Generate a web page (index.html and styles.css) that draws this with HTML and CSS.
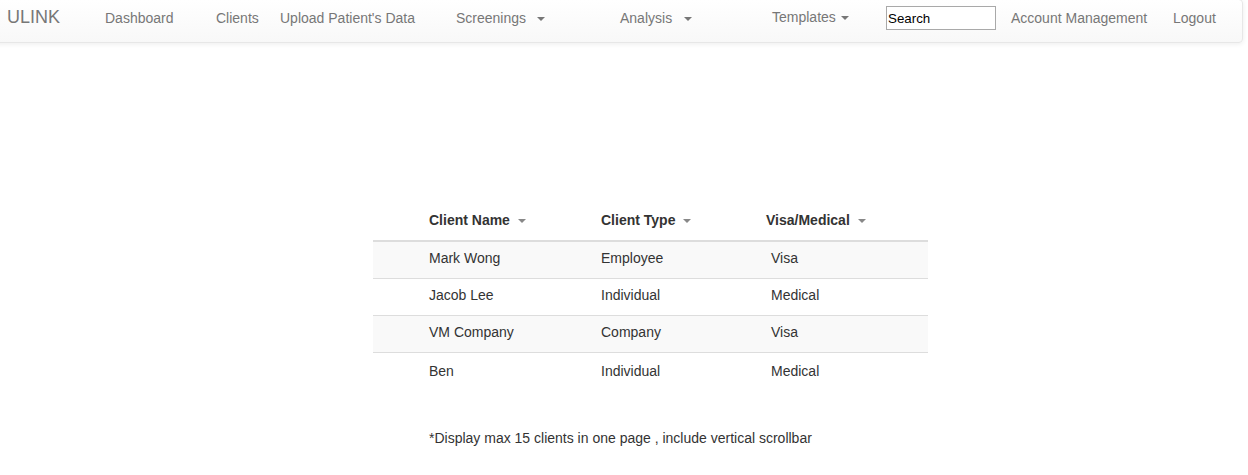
FILE: index.html
```html
<!DOCTYPE html>
<html lang="en">
<head>
<meta charset="utf-8">
<title>ULINK - Clients</title>
<link rel="stylesheet" href="styles.css">
</head>
<body>
<nav class="navbar">
  <a class="brand" href="#">ULINK</a>
  <ul class="nav">
    <li class="item w-dash"><a href="#">Dashboard</a></li>
    <li class="item w-clients"><a href="#">Clients</a></li>
    <li class="item w-upload"><a href="#">Upload Patient's Data</a></li>
    <li class="item w-screen"><a href="#">Screenings<span class="caret caret-wide"></span></a></li>
    <li class="item w-analysis"><a href="#">Analysis<span class="caret caret-wider"></span></a></li>
    <li class="item w-templates up"><a href="#">Templates<span class="caret caret-near"></span></a></li>
    <li class="item w-search"><input class="search" type="text" value="Search"></li>
    <li class="item w-account"><a href="#">Account Management</a></li>
    <li class="item"><a href="#">Logout</a></li>
  </ul>
</nav>

<main class="content">
  <table class="clients">
    <colgroup>
      <col class="c1"><col class="c2"><col class="c3">
    </colgroup>
    <thead>
      <tr>
        <th class="first">Client Name<span class="caret caret-th"></span></th>
        <th>Client Type<span class="caret caret-th"></span></th>
        <th>Visa/Medical<span class="caret caret-th"></span></th>
      </tr>
    </thead>
    <tbody>
      <tr class="odd">
        <td class="first">Mark Wong</td><td>Employee</td><td class="vm">Visa</td>
      </tr>
      <tr>
        <td class="first">Jacob Lee</td><td>Individual</td><td class="vm">Medical</td>
      </tr>
      <tr class="odd">
        <td class="first">VM Company</td><td>Company</td><td class="vm">Visa</td>
      </tr>
      <tr class="last">
        <td class="first">Ben</td><td>Individual</td><td class="vm">Medical</td>
      </tr>
    </tbody>
  </table>
  <p class="note">*Display max 15 clients in one page , include vertical scrollbar</p>
</main>
</body>
</html>
```

FILE: styles.css
```css
* { box-sizing: border-box; }

html, body {
  margin: 0;
  padding: 0;
  background: #fff;
}

body {
  font-family: "Liberation Sans", Arial, Helvetica, sans-serif;
  font-size: 14px;
  line-height: 20px;
  color: #333;
}

a { text-decoration: none; color: inherit; }

/* ---------- navbar ---------- */
.navbar {
  display: flex;
  align-items: flex-start;
  height: 44px;
  margin: -1px 5px 0 -6px;
  padding-left: 12px;
  border: 1px solid #e7e7e7;
  border-radius: 4px;
  background-image: linear-gradient(to bottom, #ffffff 0%, #f8f8f8 100%);
  box-shadow: inset 0 1px 0 rgba(255,255,255,.15), 0 1px 5px rgba(0,0,0,.075);
}

.brand {
  flex: 0 0 98px;
  padding-top: 7px;
  font-size: 18px;
  line-height: 20px;
  color: #777;
}

.nav {
  display: flex;
  align-items: flex-start;
  list-style: none;
  margin: 0;
  padding: 0;
}

.item {
  flex: 0 0 auto;
  padding-top: 8px;
  color: #777;
  white-space: nowrap;
}

.item.up { padding-top: 7px; }

.w-dash { width: 111px; }
.w-clients { width: 64px; }
.w-upload { width: 176px; }
.w-screen { width: 164px; }
.w-analysis { width: 152px; }
.w-templates { width: 114px; }
.w-search { width: 125px; padding-top: 6px; }
.w-account { width: 162px; }

.search {
  display: block;
  width: 110px;
  height: 24px;
  margin: 0;
  padding: 1px 1px;
  border: 1px solid #a9a9a9;
  background: #fff;
  font-family: "Liberation Sans", Arial, sans-serif;
  font-size: 13.33px;
  color: #000;
}

.caret {
  display: inline-block;
  width: 0;
  height: 0;
  vertical-align: middle;
  border-top: 4px solid #777;
  border-left: 4px solid transparent;
  border-right: 4px solid transparent;
}

.caret-wide { margin-left: 11px; }
.caret-wider { margin-left: 12px; }
.caret-near { margin-left: 5px; }
.caret-th { margin-left: 8px; border-top-color: #888; }

/* ---------- content ---------- */
.content {
  padding: 159px 0 0 373px;
}

.clients {
  width: 555px;
  table-layout: fixed;
  border-collapse: separate;
  border-spacing: 0;
}

.c1 { width: 220px; }
.c2 { width: 165px; }
.c3 { width: 170px; }

.clients th,
.clients td {
  text-align: left;
  padding: 6px 8px 10px 8px;
  line-height: 20px;
  vertical-align: top;
}

.clients th {
  padding-top: 8px;
  font-weight: bold;
  border-bottom: 2px solid #ddd;
}

.clients .first { padding-left: 56px; }
.clients td.vm { padding-left: 13px; }

.clients tbody tr + tr td { border-top: 1px solid #ddd; }

.clients tr.odd td { background: #f9f9f9; }

.clients tr.last td { padding-top: 8px; padding-bottom: 9px; }

.note {
  margin: 38px 0 0 56px;
  line-height: 20px;
}
```
